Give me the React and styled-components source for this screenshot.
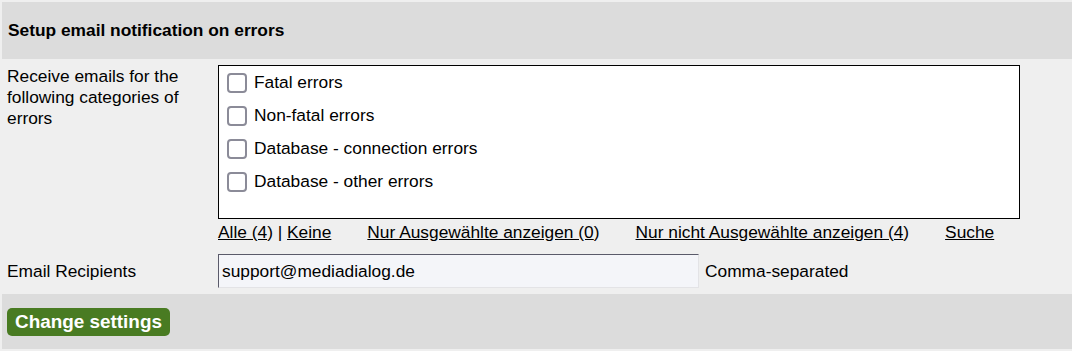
import React from "react";
import styled, { createGlobalStyle } from "styled-components";

const Global = createGlobalStyle`
  html, body { margin: 0; padding: 0; background: #efefef; }
  body { font-family: "Liberation Sans", Arial, sans-serif; color: #000; }
`;

const Page = styled.div`
  padding: 2px 0 2px 2px;
  font-size: 17.33px;
`;

const Header = styled.div`
  height: 57px;
  background: #dcdcdc;
  display: flex;
  align-items: center;
  padding-left: 6px;
  font-weight: bold;
  font-size: 17.33px;
  box-sizing: border-box;
`;

const Row = styled.div`
  display: grid;
  grid-template-columns: 216px 1fr;
  align-items: ${(p) => (p.$center ? "center" : "start")};
  padding: ${(p) => p.$pad};
`;

const Label = styled.div`
  padding-left: 5px;
  line-height: 21px;
  padding-right: 10px;
  padding-top: ${(p) => (p.$top ? "1px" : "0")};
`;

const Box = styled.div`
  width: 800px;
  height: 152px;
  border: 1px solid #000;
  background: #fff;
`;

const Item = styled.label`
  display: flex;
  align-items: center;
  height: 33px;
  padding-left: 8px;
  gap: 7px;
`;

const Check = styled.input.attrs({ type: "checkbox" })`
  appearance: none;
  margin: 0;
  width: 20px;
  height: 20px;
  box-sizing: border-box;
  border: 2.5px solid #8b8b98;
  border-radius: 4px;
  background: #fff;
`;

const Links = styled.div`
  display: flex;
  gap: 36px;
  margin-top: 3px;
  line-height: 21px;
`;

const Link = styled.a`
  color: #000;
  text-decoration: underline;
  cursor: pointer;
`;

const Field = styled.div`
  display: flex;
  align-items: center;
  gap: 6px;
`;

const Input = styled.input`
  width: 481px;
  height: 34px;
  box-sizing: border-box;
  margin: 0;
  padding: 0 3px;
  font: 17.33px "Liberation Sans", Arial, sans-serif;
  color: #000;
  background: #f4f5f9;
  border: 1px solid #e3e3e6;
  border-top-color: #5a5a6a;
  border-left-color: #5a5a6a;
  outline: none;
`;

const Footer = styled.div`
  height: 55px;
  box-sizing: border-box;
  background: #dcdcdc;
  padding: 14px 0 0 5px;
`;

const Button = styled.button`
  height: 28px;
  padding: 0 8px;
  border: none;
  border-radius: 5px;
  background: #497b22;
  color: #fff;
  font: bold 18.9px "Liberation Sans", Arial, sans-serif;
  cursor: pointer;
`;

const categories = [
  "Fatal errors",
  "Non-fatal errors",
  "Database - connection errors",
  "Database - other errors",
];

export default function App() {
  return (
    <>
      <Global />
      <Page>
        <Header>Setup email notification on errors</Header>
        <Row $pad="6px 0 0 0">
          <Label $top>Receive emails for the following categories of errors</Label>
          <div>
            <Box>
              {categories.map((c) => (
                <Item key={c}>
                  <Check />
                  {c}
                </Item>
              ))}
            </Box>
            <Links>
              <span>
                <Link>Alle (4</Link>) | <Link>Keine</Link>
              </span>
              <span>
                <Link>Nur Ausgewählte anzeigen (0</Link>)
              </span>
              <span>
                <Link>Nur nicht Ausgewählte anzeigen (4</Link>)
              </span>
              <Link>Suche</Link>
            </Links>
          </div>
        </Row>
        <Row $center $pad="11px 0 6px 0">
          <Label>Email Recipients</Label>
          <Field>
            <Input defaultValue="support@mediadialog.de" />
            <span>Comma-separated</span>
          </Field>
        </Row>
        <Footer>
          <Button>Change settings</Button>
        </Footer>
      </Page>
    </>
  );
}
